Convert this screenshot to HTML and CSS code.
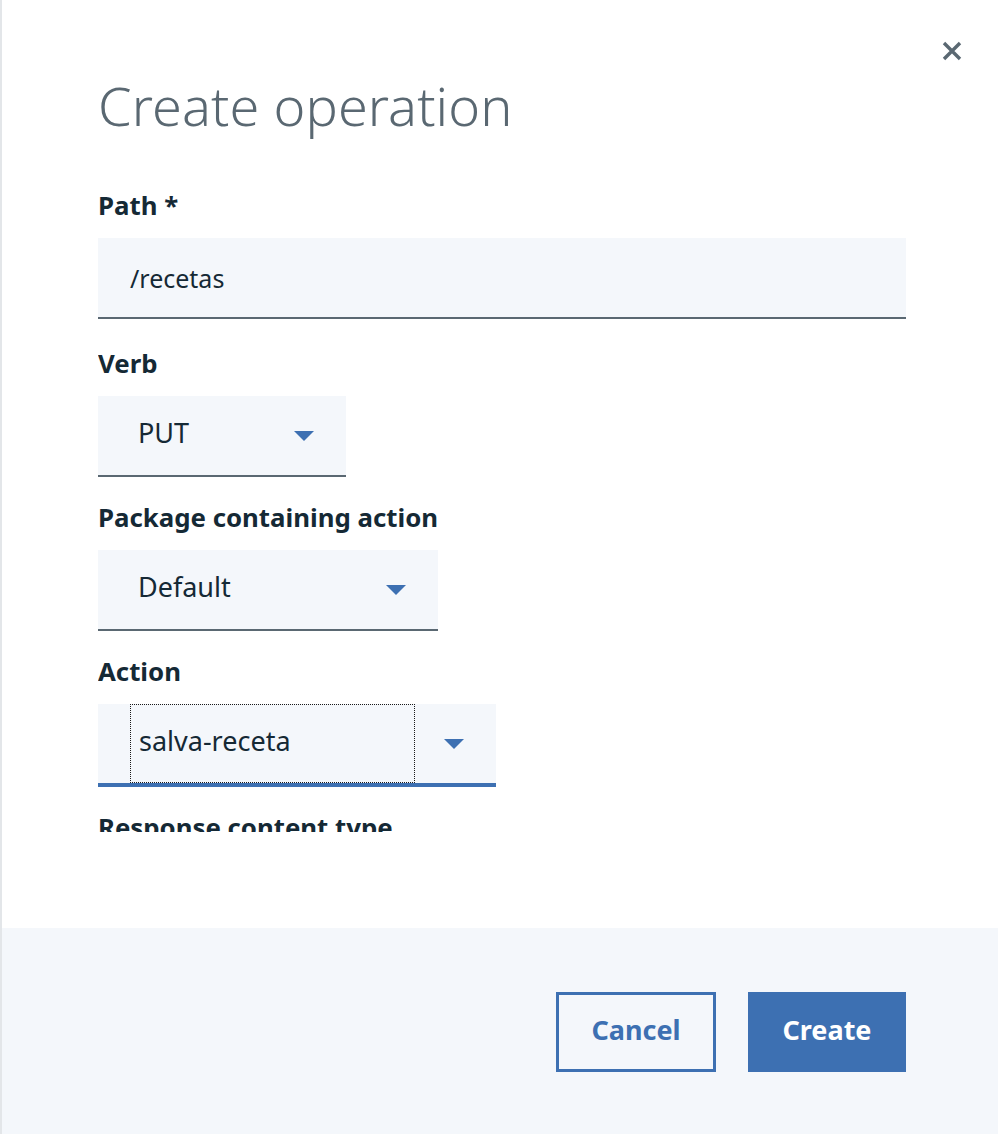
FILE: index.html
```html
<!DOCTYPE html>
<html lang="en">
<head>
<meta charset="utf-8">
<title>Create operation</title>
<link rel="stylesheet" href="styles.css">
</head>
<body>
<div class="modal">
  <button class="close" aria-label="Close">
    <svg width="20" height="20" viewBox="0 0 20 20"><path d="M2 2 L18 18 M18 2 L2 18" stroke="#5a6872" stroke-width="3.4" fill="none"/></svg>
  </button>
  <div class="content">
    <h1 class="title">Create operation</h1>
    <div class="form">
      <div class="item first">
        <label class="label">Path *</label>
        <div class="input">/recetas</div>
      </div>
      <div class="item">
        <label class="label">Verb</label>
        <div class="select verb"><span class="value">PUT</span><svg class="arrow" width="20" height="10" viewBox="0 0 20 10"><polygon points="0,0 20,0 10,10" fill="#3d70b2"/></svg></div>
      </div>
      <div class="item">
        <label class="label">Package containing action</label>
        <div class="select package"><span class="value">Default</span><svg class="arrow" width="20" height="10" viewBox="0 0 20 10"><polygon points="0,0 20,0 10,10" fill="#3d70b2"/></svg></div>
      </div>
      <div class="item">
        <label class="label">Action</label>
        <div class="select action"><span class="focus"><span class="value">salva-receta</span></span><svg class="arrow" width="20" height="10" viewBox="0 0 20 10"><polygon points="0,0 20,0 10,10" fill="#3d70b2"/></svg></div>
      </div>
      <div class="item">
        <label class="label">Response content type</label>
      </div>
    </div>
  </div>
  <div class="footer">
    <button class="btn secondary">Cancel</button>
    <button class="btn primary">Create</button>
  </div>
</div>
</body>
</html>
```

FILE: styles.css
```css
* { box-sizing: border-box; }
html, body { margin: 0; padding: 0; background: #ffffff; }
body {
  font-family: "Noto Sans", "Open Sans", sans-serif;
  color: #152935;
}
.modal {
  position: relative;
  height: 1134px;
  border-left: 2px solid #e3e6e9;
  display: flex;
  flex-direction: column;
  background: #ffffff;
}
.close {
  position: absolute;
  top: 39px;
  left: 938px;
  width: 24px;
  height: 24px;
  padding: 2px;
  border: 0;
  background: transparent;
}
.close svg { display: block; }
.content {
  flex: 1;
  padding: 0 92px 0 96px;
}
.title {
  margin: 0;
  padding-top: 73px;
  font-size: 54px;
  line-height: 64px;
  font-weight: 300;
  color: #5a6872;
  letter-spacing: 0.1px;
}
.form {
  margin-top: 44px;
  padding-top: 8px;
  height: 651px;
  overflow: hidden;
}
.item { margin-bottom: 24px; }
.item.first { margin-bottom: 28px; }
.label {
  display: block;
  font-size: 25.8px;
  line-height: 32px;
  font-weight: 700;
  color: #152935;
  margin-bottom: 17px;
}
.input {
  height: 81px;
  background: #f4f7fb;
  border-bottom: 2px solid #5a6872;
  padding-left: 32px;
  display: flex;
  align-items: center;
  font-size: 25px;
  color: #152935;
}
.select {
  height: 81px;
  background: #f4f7fb;
  border-bottom: 2px solid #5a6872;
  display: flex;
  align-items: center;
  justify-content: space-between;
  padding: 0 32px 0 40px;
  font-size: 27px;
  color: #152935;
}
.select .value { padding-bottom: 6px; }
.verb { width: 248px; }
.package { width: 340px; }
.action {
  width: 398px;
  height: 83px;
  border-bottom: 4px solid #3d70b2;
  padding-left: 32px;
  align-items: stretch;
}
.action .focus {
  width: 285px;
  border: 1px dotted #1a1a1a;
  padding-left: 8px;
  display: flex;
  align-items: center;
}
.action .arrow { align-self: center; }
.footer {
  height: 206px;
  background: #f4f7fb;
  display: flex;
  justify-content: flex-end;
  align-items: flex-start;
  gap: 32px;
  padding: 64px 92px 0 0;
}
.btn {
  height: 80px;
  font-family: inherit;
  font-size: 27px;
  font-weight: 700;
  padding: 0 0 5px;
  cursor: pointer;
}
.secondary {
  width: 160px;
  background: transparent;
  border: 3px solid #3d70b2;
  color: #3d70b2;
}
.primary {
  width: 158px;
  background: #3d70b2;
  border: 0;
  color: #ffffff;
}
```
